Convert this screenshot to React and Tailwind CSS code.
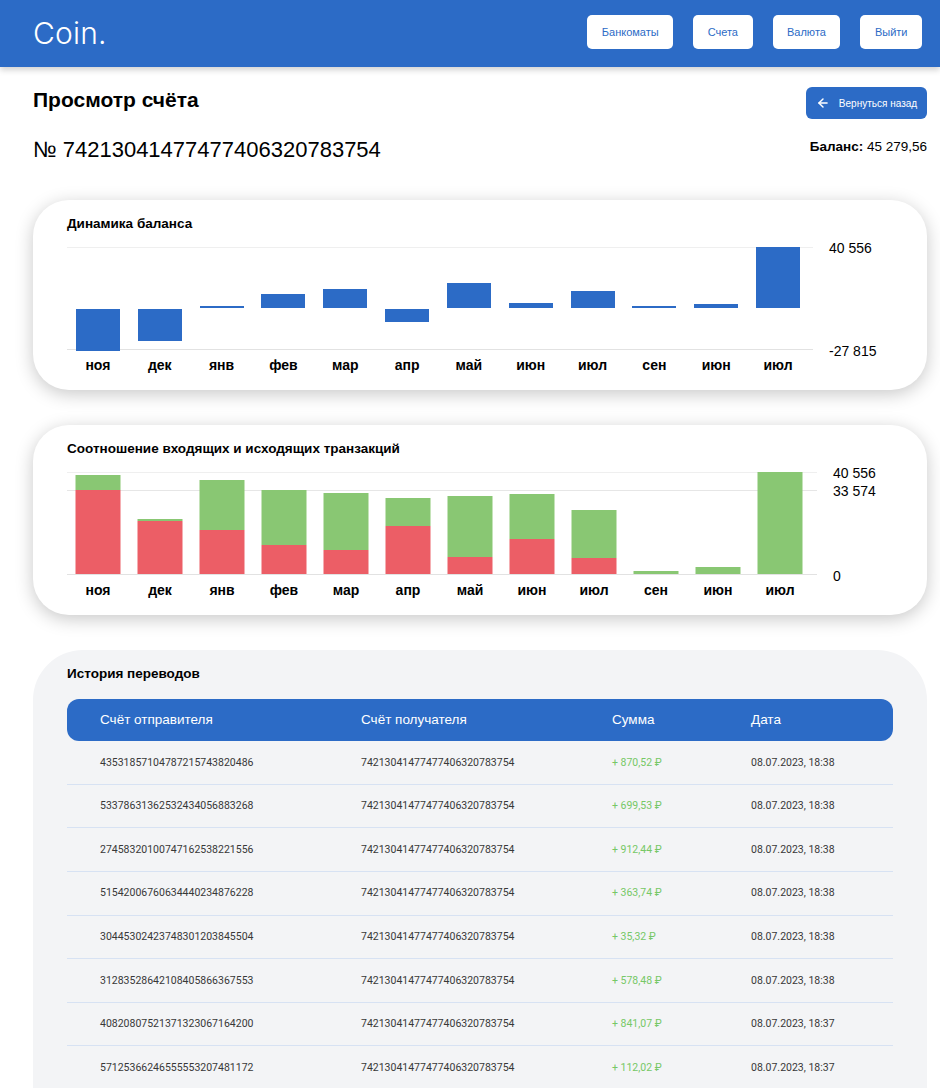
import React from "react";
import { ArrowLeft } from "lucide-react";

const blue = "bg-[#2c6bc6]";

const months = ["ноя", "дек", "янв", "фев", "мар", "апр", "май", "июн", "июл", "сен", "июн", "июл"];

// balance chart, in px from the zero line (plot is 103px, zero at 62px from top)
const balance = [-41.3, -31.3, 2.7, 14.7, 19.7, -12.3, 25.7, 5.7, 17.7, 2, 4.3, 61];

// ratio chart: [total, red] in px from the bottom
const ratio = [
  [99, 84],
  [55, 53.7],
  [94, 44.3],
  [84, 29],
  [81, 24],
  [76, 48],
  [78.7, 17.3],
  [80, 35.3],
  [64, 16.7],
  [3, 0],
  [7.3, 0],
  [102.3, 0],
];

const rows = [
  ["43531857104787215743820486", "+ 870,52 ₽", "08.07.2023, 18:38"],
  ["53378631362532434056883268", "+ 699,53 ₽", "08.07.2023, 18:38"],
  ["27458320100747162538221556", "+ 912,44 ₽", "08.07.2023, 18:38"],
  ["51542006760634440234876228", "+ 363,74 ₽", "08.07.2023, 18:38"],
  ["30445302423748301203845504", "+ 35,32 ₽", "08.07.2023, 18:38"],
  ["31283528642108405866367553", "+ 578,48 ₽", "08.07.2023, 18:38"],
  ["40820807521371323067164200", "+ 841,07 ₽", "08.07.2023, 18:37"],
  ["57125366246555553207481172", "+ 112,02 ₽", "08.07.2023, 18:37"],
];

const Header = () => (
  <header className={`${blue} h-[67px] flex items-center justify-between pl-[33px] pr-[18px] shadow-[0_3px_6px_rgba(0,0,0,0.18)] relative z-10`}>
    <div className="text-white text-[30px] font-light font-['Inter'] tracking-[0.2px]">Coin.</div>
    <nav className="flex gap-5 mb-[3px]">
      {["Банкоматы", "Счета", "Валюта", "Выйти"].map((t) => (
        <button key={t} className="bg-white rounded-[5px] h-[34px] px-[14.5px] text-[11px] text-[#2c6bc6] font-['Liberation_Sans']">
          {t}
        </button>
      ))}
    </nav>
  </header>
);

const MonthRow = ({ width, pr }) => (
  <div className="flex mt-[7px]" style={{ width, paddingRight: pr }}>
    {months.map((m, i) => (
      <div key={i} className="flex-1 text-center text-[14px] font-bold text-black leading-[16px]">
        {m}
      </div>
    ))}
  </div>
);

const BalanceChart = () => (
  <div className="bg-white rounded-[36px] shadow-[0_4px_18px_rgba(0,0,0,0.22)] pl-[34px] pr-[46px] pt-[16px] pb-[17px]">
    <h3 className="text-[13.5px] font-bold leading-[16px] text-black">Динамика баланса</h3>
    <div className="flex mt-[15px]">
      <div>
        <div className="relative w-[746px] h-[103px] border-t border-[#efefef] border-b border-b-[#e2e2e2]">
          <div className="absolute inset-0 flex pr-[4px]">
            {balance.map((v, i) => (
              <div key={i} className="flex-1 relative">
                <div
                  className="absolute left-1/2 -translate-x-1/2 w-[44px] bg-[#2c6bc6]"
                  style={v >= 0 ? { bottom: 41, height: v } : { top: 61, height: -v }}
                />
              </div>
            ))}
          </div>
        </div>
        <MonthRow width={746} pr={4} />
      </div>
      <div className="relative w-[64px] ml-[16px] text-[14px] text-black">
        <div className="absolute top-[-9px] left-0">40 556</div>
        <div className="absolute top-[94px] left-0">-27 815</div>
      </div>
    </div>
  </div>
);

const RatioChart = () => (
  <div className="bg-white rounded-[36px] shadow-[0_4px_18px_rgba(0,0,0,0.22)] pl-[34px] pr-[40px] pt-[16px] pb-[17px]">
    <h3 className="text-[13.5px] font-bold leading-[16px] text-black">Соотношение входящих и исходящих транзакций</h3>
    <div className="flex mt-[15px]">
      <div>
        <div className="relative w-[750px] h-[103px] border-t border-[#efefef] border-b border-b-[#e2e2e2]">
          <div className="absolute left-0 right-0 top-[17px] border-t border-[#e6e6e6]" />
          <div className="absolute inset-0 flex pr-[6px]">
            {ratio.map(([total, red], i) => (
              <div key={i} className="flex-1 relative">
                <div
                  className="absolute bottom-0 left-1/2 -translate-x-1/2 w-[45px] flex flex-col"
                  style={{ height: total }}
                >
                  <div className="flex-1 bg-[#89c773]" />
                  <div className="bg-[#ec5e66]" style={{ height: red }} />
                </div>
              </div>
            ))}
          </div>
        </div>
        <MonthRow width={750} pr={6} />
      </div>
      <div className="relative w-[64px] ml-[16px] text-[14px] text-black">
        <div className="absolute top-[-9px] left-0">40 556</div>
        <div className="absolute top-[9px] left-0">33 574</div>
        <div className="absolute top-[94px] left-0">0</div>
      </div>
    </div>
  </div>
);

const History = () => (
  <section className="bg-[#f3f4f6] rounded-t-[50px] pl-[34px] pr-[34px] pt-[16px] pb-[30px]">
    <h3 className="text-[13.5px] font-bold leading-[16px] text-black">История переводов</h3>
    <div className={`${blue} mt-[17px] h-[42px] rounded-[12px] grid grid-cols-[261px_251px_139px_1fr] items-center pl-[33px] text-white text-[13.5px]`}>
      <div>Счёт отправителя</div>
      <div>Счёт получателя</div>
      <div>Сумма</div>
      <div>Дата</div>
    </div>
    {rows.map(([from, sum, date], i) => (
      <div
        key={i}
        className="h-[43.6px] border-b border-[#d7e2f3] grid grid-cols-[261px_251px_139px_1fr] items-center pl-[33px] text-[10.5px] font-['Roboto'] text-[#383838]"
      >
        <div>{from}</div>
        <div>74213041477477406320783754</div>
        <div className="text-[#76c866]">{sum}</div>
        <div>{date}</div>
      </div>
    ))}
  </section>
);

export default function App() {
  return (
    <div className="min-h-screen bg-white font-['Liberation_Sans',Arial,sans-serif]">
      <Header />
      <main className="pl-[33px] pr-[13px]">
        <div className="flex justify-between items-start pt-[20px]">
          <h1 className="text-[21px] font-bold leading-[26px] text-black">Просмотр счёта</h1>
          <button className={`${blue} rounded-[6px] h-[32px] w-[121px] flex items-center justify-center gap-[9px] text-white text-[10px]`}>
            <ArrowLeft size={14} strokeWidth={2.5} />
            Вернуться назад
          </button>
        </div>
        <div className="flex justify-between items-end mt-[18px]">
          <div className="text-[22px] leading-[26px] text-black">№ 74213041477477406320783754</div>
          <div className="text-[13.5px] text-black mb-[6px]">
            <span className="font-bold">Баланс:</span> 45 279,56
          </div>
        </div>
        <div className="mt-[37px] flex flex-col gap-[35px]">
          <BalanceChart />
          <RatioChart />
          <History />
        </div>
      </main>
    </div>
  );
}
